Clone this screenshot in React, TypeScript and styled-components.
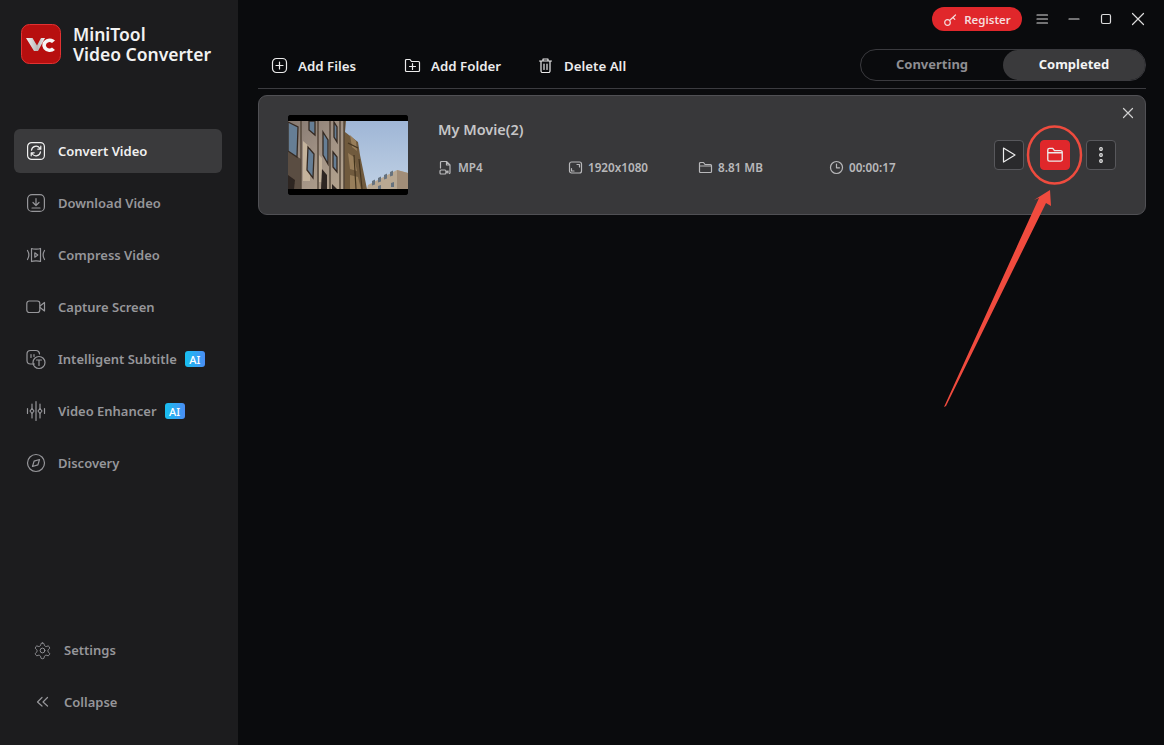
import React from 'react';
import styled, { createGlobalStyle } from 'styled-components';

const GlobalStyle = createGlobalStyle`
  html, body {
    margin: 0;
    height: 100%;
    background: #0a0b0d;
    overflow: hidden;
  }
  #root { height: 100%; }
  * { box-sizing: border-box; }
`;

const Shell = styled.div`
  position: relative;
  display: flex;
  width: 1164px;
  height: 745px;
  font-family: 'Noto Sans', 'Open Sans', sans-serif;
  font-size: 13px;
  font-weight: 600;
`;

const Sidebar = styled.aside`
  width: 238px;
  flex-shrink: 0;
  display: flex;
  flex-direction: column;
  background: #1c1c1e;
  padding: 23px 16px 21px 14px;
`;

const Brand = styled.div`
  display: flex;
  align-items: center;
  gap: 12px;
  padding-left: 7px;
  height: 42px;
  margin-bottom: 64px;
`;

const BrandName = styled.div`
  display: flex;
  flex-direction: column;
  gap: 3px;
  color: #f2f2f2;
  font-size: 17.5px;
  font-weight: 600;
  padding-top: 1px;
  white-space: nowrap;
`;

const BrandLine = styled.div`
  height: 17px;
  line-height: 17px;
`;

const Nav = styled.nav`
  display: flex;
  flex-direction: column;
  gap: 8px;
`;

const NavItem = styled.div<{ $active?: boolean }>`
  display: flex;
  align-items: center;
  height: 44px;
  padding-left: 11px;
  gap: 11px;
  border-radius: 6px;
  background: ${({ $active }) => ($active ? '#3a3a3c' : 'transparent')};
  color: ${({ $active }) => ($active ? '#f0f0f0' : '#96969a')};
  white-space: nowrap;
`;

const AiBadge = styled.span`
  display: flex;
  align-items: center;
  justify-content: center;
  width: 20px;
  height: 16px;
  margin-left: -3px;
  border-radius: 3px;
  background: linear-gradient(90deg, #16c0f0, #4a8df5);
  color: #fff;
  font-size: 11px;
  font-weight: 500;
`;

const BottomNav = styled.div`
  margin-top: auto;
  display: flex;
  flex-direction: column;
  gap: 8px;
`;

const BottomItem = styled.div`
  display: flex;
  align-items: center;
  height: 44px;
  padding-left: 19px;
  gap: 12px;
  color: #96969a;
`;

const Main = styled.main`
  flex: 1;
  display: flex;
  flex-direction: column;
  padding: 0 18px 0 20px;
  min-width: 0;
`;

const TitleBar = styled.div`
  height: 38px;
  padding-top: 7px;
  display: flex;
  justify-content: flex-end;
  align-items: flex-start;
  margin-right: -8px;
`;

const RegisterButton = styled.div`
  display: flex;
  align-items: center;
  justify-content: center;
  gap: 6px;
  width: 90px;
  height: 24px;
  border-radius: 12px;
  background: #e0272b;
  color: #f6dcdc;
  font-size: 11.5px;
  font-weight: 600;
  margin-right: 4px;
`;

const WindowButton = styled.div`
  display: flex;
  align-items: center;
  justify-content: center;
  width: 32px;
  height: 24px;
  color: #dcdcdc;
`;

const Toolbar = styled.div`
  display: flex;
  align-items: center;
  height: 51px;
  padding: 8px 0 0 13px;
  border-bottom: 1px solid #3c3c40;
  font-size: 13.3px;
`;

const ToolButton = styled.div<{ $width: number }>`
  display: flex;
  align-items: center;
  gap: 10px;
  width: ${({ $width }) => $width}px;
  color: #ececec;
  white-space: nowrap;
  padding-bottom: 3px;
`;

const Tabs = styled.div`
  margin-left: auto;
  display: flex;
  width: 286px;
  height: 32px;
  margin-bottom: 5px;
  border: 1px solid #3a3a3e;
  border-radius: 16px;
  font-size: 13px;
`;

const Tab = styled.div<{ $active?: boolean }>`
  flex: 1;
  display: flex;
  align-items: center;
  justify-content: center;
  border-radius: 16px;
  background: ${({ $active }) => ($active ? '#3a3a3c' : 'transparent')};
  color: ${({ $active }) => ($active ? '#f4f4f4' : '#8e8e92')};
  font-weight: 700;
  padding-bottom: 2px;
`;

const Card = styled.section`
  position: relative;
  margin-top: 6px;
  height: 120px;
  display: flex;
  align-items: center;
  padding: 0 29px;
  background: #38383a;
  border: 1px solid #505054;
  border-radius: 9px;
`;

const Thumb = styled.svg`
  width: 120px;
  height: 80px;
  flex-shrink: 0;
  border-radius: 3px;
`;

const Info = styled.div`
  margin-left: 30px;
  width: 520px;
  display: flex;
  flex-direction: column;
  gap: 20px;
  padding-bottom: 16px;
`;

const Title = styled.div`
  color: #c6c6c8;
  font-size: 14.5px;
  line-height: 20px;
`;

const Meta = styled.div`
  display: grid;
  grid-template-columns: 130px 130px 131px 1fr;
  color: #b8b8ba;
  font-size: 11.7px;
`;

const MetaItem = styled.div`
  display: flex;
  align-items: center;
  gap: 5px;
  white-space: nowrap;
`;

const Actions = styled.div`
  margin-left: auto;
  display: flex;
  gap: 16px;
`;

const ActionButton = styled.div<{ $primary?: boolean }>`
  display: flex;
  align-items: center;
  justify-content: center;
  width: 30px;
  height: 30px;
  border-radius: 4px;
  background: ${({ $primary }) => ($primary ? '#e0272b' : '#2a2a2c')};
  border: 1px solid ${({ $primary }) => ($primary ? '#e0272b' : '#58585c')};
  color: #ececec;
`;

const CloseCard = styled.div`
  position: absolute;
  top: 11px;
  right: 11px;
  display: flex;
  color: #d0d0d0;
`;

const Annotation = styled.svg`
  position: absolute;
  left: 0;
  top: 0;
  width: 1164px;
  height: 745px;
  pointer-events: none;
`;

const Icon = styled.svg.attrs({
  fill: 'none',
  stroke: 'currentColor',
  strokeWidth: 1.2,
  strokeLinecap: 'round',
  strokeLinejoin: 'round',
})`
  flex-shrink: 0;
  display: block;
`;

const navIcons: Record<string, React.ReactNode> = {
  convert: (
    <>
      <rect x="2.6" y="2.6" width="16.8" height="16.8" rx="4" />
      <path d="M6.5 10.2a4.6 4.6 0 0 1 8.2-2.2l1 1.2M15.8 6.2v3h-3M15.5 11.8a4.6 4.6 0 0 1-8.2 2.2l-1-1.2M6.2 15.8v-3h3" />
    </>
  ),
  download: (
    <>
      <rect x="2.6" y="2.6" width="16.8" height="16.8" rx="4.5" />
      <path d="M11 6.5v6.5M8 10.5l3 3 3-3M7 16h8" />
    </>
  ),
  compress: (
    <>
      <path d="M6.5 4.5c1.5.9 7.5.9 9 0v13c-1.5-.9-7.5-.9-9 0z" />
      <path d="M9.8 8.8l3 2.2-3 2.2zM2.5 6.5c1.6 2.6 1.6 6.4 0 9M19.5 6.5c-1.6 2.6-1.6 6.4 0 9" />
    </>
  ),
  capture: (
    <>
      <rect x="1.8" y="5" width="13" height="11.5" rx="2.5" />
      <path d="M15 10l4.5-3.5v8.500L15 11.5" />
    </>
  ),
  subtitle: (
    <>
      <path d="M9.5 16H5.5A3.5 3.5 0 0 1 2 12.5V6a3.5 3.5 0 0 1 3.5-3.5H11A3.5 3.5 0 0 1 14.5 6" />
      <path d="M6 6.5v3M9 6.5v2" />
      <circle cx="14" cy="14.5" r="6" />
      <path d="M11.5 12h5M14 12v5.5" />
    </>
  ),
  enhancer: (
    <>
      <path d="M11 1.5v19M7 4v4.5M7 13.5V18M15 4v4.5M15 13.5V18M2.5 8.5v5M19.5 8.5v5" />
      <path d="M7 8.5l2 2.5-2 2.5-2-2.5zM15 8.5l2 2.5-2 2.5-2-2.5z" />
    </>
  ),
  discovery: (
    <>
      <circle cx="11" cy="11" r="8.5" />
      <path d="M14.5 7.5l-1.6 5.4-5.4 1.6 1.6-5.4z" />
    </>
  ),
};

const NavIcon = ({ name }: { name: string }) => (
  <Icon width="22" height="22" viewBox="0 0 22 22">
    {navIcons[name]}
  </Icon>
);

const navItems = [
  { icon: 'convert', label: 'Convert Video', active: true },
  { icon: 'download', label: 'Download Video' },
  { icon: 'compress', label: 'Compress Video' },
  { icon: 'capture', label: 'Capture Screen' },
  { icon: 'subtitle', label: 'Intelligent Subtitle', ai: true },
  { icon: 'enhancer', label: 'Video Enhancer', ai: true },
  { icon: 'discovery', label: 'Discovery' },
];

const Logo = () => (
  <svg width="40" height="40" viewBox="0 0 40 40">
    <defs>
      <linearGradient id="vcGrad" x1="0" y1="0" x2="1" y2="0">
        <stop offset="0" stopColor="#f4f4f4" />
        <stop offset="0.6" stopColor="#b9b9b9" />
        <stop offset="1" stopColor="#f0f0f0" />
      </linearGradient>
    </defs>
    <rect x="0.5" y="0.5" width="39" height="39" rx="8" fill="#b70f0f" stroke="#e23232" />
    <path d="M5 14h6.5l4.5 7.5 4-7.5h4l-7 13h-4z" fill="url(#vcGrad)" />
    <path d="M34 16.5a8 8 0 0 0-12.5 2.5 7 7 0 0 0 1 6 8 8 0 0 0 11.5 1l-3-2.5a3.8 3.8 0 0 1-5.5-.5 3 3 0 0 1 0-3.5 4 4 0 0 1 5.500-.5z" fill="#f6f6f6" />
  </svg>
);

const windows = [
  '0,7 10,12 9,42 0,36',
  '21,6 27,6 27,20 21,15',
  '20,32 26,39 25,63 19,55',
  '35,17 40,25 40,49 35,40',
  '46,7 49,12 49,27 46,22',
  '45,37 49,42 49,57 45,52',
];

const darkWindows = ['0,60 7,65 6,74 0,74', '34,54 39,60 39,74 33,74', '44,69 49,74 44,74'];

const Thumbnail = () => (
  <Thumb viewBox="0 0 120 80">
    <defs>
      <linearGradient id="sky" x1="0" y1="0" x2="0" y2="1">
        <stop offset="0" stopColor="#9fb6d6" />
        <stop offset="1" stopColor="#bfd0e4" />
      </linearGradient>
      <linearGradient id="stone" x1="0" y1="0" x2="1" y2="1">
        <stop offset="0" stopColor="#857870" />
        <stop offset="0.5" stopColor="#a09184" />
        <stop offset="1" stopColor="#b5a48e" />
      </linearGradient>
      <filter id="soft">
        <feGaussianBlur stdDeviation="0.45" />
      </filter>
    </defs>
    <rect width="120" height="80" fill="#000" />
    <g filter="url(#soft)">
      <rect y="6" width="120" height="68" fill="url(#sky)" />
      <path d="M80 70l29-15 11 3v16H79z" fill="#b9a892" />
      <path d="M109 55l11 3v16h-11z" fill="#a18d78" />
      <path d="M84 66l3-1.5v5l-3 1zM90 63l3-1.5v5l-3 1zM96 60l3-1.5v5l-3 1zM102 57l3-1.5v5l-3 1zM103 68l3-1v5h-3zM90 71l3-1v4h-3z" fill="#66727e" />
      <path d="M58 6l-1 11 13 10 2 13 7 34H52V6z" fill="#6f5a3e" />
      <path d="M62 20l6 6 1 10-5-4zM60 38l6 4 3 14-7-2zM62 60l8 2 3 12H62z" fill="#987e5a" />
      <path d="M66 40l2 34M71 44l3 30M60 28l10 5" stroke="#43341f" strokeWidth="1.2" fill="none" />
      <path d="M0 6h56v68H0z" fill="url(#stone)" />
      <path d="M0 36l13 8v30H0z" fill="#5a4d42" />
      <path d="M13 6v68M30 6v68M42 6v68M52 6v68M56 6v68" stroke="#524438" strokeWidth="1.4" fill="none" />
      <path d="M15 26l7 6v34h-7zM31 40l3 3v24h-3z" fill="#c4b39c" />
      {windows.map((points) => (
        <polygon key={points} points={points} fill="#667e95" stroke="#352a23" strokeWidth="1.3" />
      ))}
      {darkWindows.map((points) => (
        <polygon key={points} points={points} fill="#2f2620" />
      ))}
    </g>
    <rect y="0" width="120" height="6" fill="#000" />
    <rect y="74" width="120" height="6" fill="#000" />
  </Thumb>
);

export default function App() {
  return (
    <Shell>
      <GlobalStyle />
      <Sidebar>
        <Brand>
          <Logo />
          <BrandName>
            <BrandLine>MiniTool</BrandLine>
            <BrandLine>Video Converter</BrandLine>
          </BrandName>
        </Brand>
        <Nav>
          {navItems.map((item) => (
            <NavItem key={item.label} $active={item.active}>
              <NavIcon name={item.icon} />
              <span>{item.label}</span>
              {item.ai && <AiBadge>AI</AiBadge>}
            </NavItem>
          ))}
        </Nav>
        <BottomNav>
          <BottomItem>
            <Icon width="19" height="19" viewBox="0 0 24 24" strokeWidth="1.5">
              <path d="M12.2 2.5h-.4a2 2 0 0 0-2 2v.2a2 2 0 0 1-1 1.7l-.4.3a2 2 0 0 1-2 0l-.2-.1a2 2 0 0 0-2.7.7l-.2.4a2 2 0 0 0 .7 2.7l.2.1a2 2 0 0 1 1 1.7v.5a2 2 0 0 1-1 1.7l-.2.1a2 2 0 0 0-.7 2.7l.2.4a2 2 0 0 0 2.7.7l.2-.1a2 2 0 0 1 2 0l.4.3a2 2 0 0 1 1 1.7v.2a2 2 0 0 0 2 2h.4a2 2 0 0 0 2-2v-.2a2 2 0 0 1 1-1.7l.4-.3a2 2 0 0 1 2 0l.2.1a2 2 0 0 0 2.7-.7l.2-.4a2 2 0 0 0-.7-2.700l-.2-.1a2 2 0 0 1-1-1.7v-.5a2 2 0 0 1 1-1.7l.2-.1a2 2 0 0 0 .7-2.7l-.2-.4a2 2 0 0 0-2.7-.7l-.2.1a2 2 0 0 1-2 0l-.4-.3a2 2 0 0 1-1-1.7v-.2a2 2 0 0 0-2-2z" />
              <circle cx="12" cy="12" r="3" />
            </Icon>
            <span>Settings</span>
          </BottomItem>
          <BottomItem>
            <Icon width="19" height="19" viewBox="0 0 19 19" strokeWidth="1.3">
              <path d="M9 4.5L4.5 9 9 13M14.5 4.5L10 9l4.5 4" />
            </Icon>
            <span>Collapse</span>
          </BottomItem>
        </BottomNav>
      </Sidebar>

      <Main>
        <TitleBar>
          <RegisterButton>
            <Icon width="15" height="15" viewBox="0 0 15 15" strokeWidth="2" stroke="#f6dcdc">
              <circle cx="4.5" cy="10.5" r="2.8" />
              <path d="M6.8 8.2L12.5 3M10 5.5l1.8 1.8" />
            </Icon>
            <span>Register</span>
          </RegisterButton>
          <WindowButton>
            <Icon width="14" height="14" viewBox="0 0 14 14" strokeWidth="1.5" strokeLinecap="butt">
              <path d="M2 3h10.5M2 7h10.5M2 11h10.5" />
            </Icon>
          </WindowButton>
          <WindowButton>
            <Icon width="14" height="14" viewBox="0 0 14 14" strokeWidth="1.5" strokeLinecap="butt">
              <path d="M2 7h10" />
            </Icon>
          </WindowButton>
          <WindowButton>
            <Icon width="14" height="14" viewBox="0 0 14 14" strokeWidth="1.5">
              <rect x="2.5" y="2.5" width="9" height="9" rx="1.5" />
            </Icon>
          </WindowButton>
          <WindowButton>
            <Icon width="14" height="14" viewBox="0 0 14 14" strokeWidth="1.5">
              <path d="M1.5 1.5l11 11M12.5 1.5l-11 11" />
            </Icon>
          </WindowButton>
        </TitleBar>

        <Toolbar>
          <ToolButton $width={133}>
            <Icon width="17" height="17" viewBox="0 0 17 17">
              <rect x="1.5" y="1.5" width="14" height="14" rx="4" />
              <path d="M8.5 5v7M5 8.5h7" />
            </Icon>
            <span>Add Files</span>
          </ToolButton>
          <ToolButton $width={133}>
            <Icon width="17" height="17" viewBox="0 0 17 17">
              <path d="M1.5 3.5a1 1 0 0 1 1-1h3.5l1.5 2h7a1 1 0 0 1 1 1v8a1 1 0 0 1-1 1h-12a1 1 0 0 1-1-1z" />
              <path d="M8.5 6.5v6M5.5 9.5h6" />
            </Icon>
            <span>Add Folder</span>
          </ToolButton>
          <ToolButton $width={100}>
            <Icon width="17" height="17" viewBox="0 0 17 17">
              <path d="M2.5 4h12M6 4V2h5v2M4 4v10a1.5 1.5 0 0 0 1.5 1.5h6A1.5 1.5 0 0 0 13 14V4M7 7v5.5M10 7v5.5" />
            </Icon>
            <span>Delete All</span>
          </ToolButton>
          <Tabs>
            <Tab>Converting</Tab>
            <Tab $active>Completed</Tab>
          </Tabs>
        </Toolbar>

        <Card>
          <CloseCard>
            <Icon width="12" height="12" viewBox="0 0 12 12" strokeWidth="1.3">
              <path d="M1.5 1.5l9 9M10.5 1.5l-9 9" />
            </Icon>
          </CloseCard>
          <Thumbnail />
          <Info>
            <Title>My Movie(2)</Title>
            <Meta>
              <MetaItem>
                <Icon width="15" height="15" viewBox="0 0 15 15" strokeWidth="1">
                  <path d="M2.5 8V2.5a1 1 0 0 1 1-1h5l3.5 3.5v7.5a1 1 0 0 1-.5 1M8.5 1.5V5H12" />
                  <rect x="2" y="10" width="6" height="4" rx="1" />
                  <path d="M8 12l2-1v2z" />
                </Icon>
                <span>MP4</span>
              </MetaItem>
              <MetaItem>
                <Icon width="15" height="15" viewBox="0 0 15 15" strokeWidth="1">
                  <rect x="1.5" y="2" width="12" height="11" rx="2" />
                  <path d="M9 4.5h2.5V7M3.5 8.5V11H6" />
                </Icon>
                <span>1920x1080</span>
              </MetaItem>
              <MetaItem>
                <Icon width="15" height="15" viewBox="0 0 15 15" strokeWidth="1">
                  <path d="M1.5 3.5a1 1 0 0 1 1-1h3l1.5 2h5.5a1 1 0 0 1 1 1v6a1 1 0 0 1-1 1h-10a1 1 0 0 1-1-1zM1.5 6h12" />
                </Icon>
                <span>8.81 MB</span>
              </MetaItem>
              <MetaItem>
                <Icon width="15" height="15" viewBox="0 0 15 15" strokeWidth="1">
                  <circle cx="7.5" cy="7.5" r="6" />
                  <path d="M7.5 4v3.8h3" />
                </Icon>
                <span>00:00:17</span>
              </MetaItem>
            </Meta>
          </Info>
          <Actions>
            <ActionButton>
              <Icon width="18" height="18" viewBox="0 0 18 18" strokeWidth="1.3">
                <path d="M3.5 2l11.5 7-11.5 7z" />
              </Icon>
            </ActionButton>
            <ActionButton $primary>
              <Icon width="20" height="20" viewBox="0 0 18 18" strokeWidth="1.1">
                <path d="M2.5 4.5a1.5 1.5 0 0 1 1.500-1.500h3l1.500 2H14a1.5 1.5 0 0 1 1.5 1.5v6.500A1.5 1.5 0 0 1 14 14.5H4A1.5 1.5 0 0 1 2.5 13zM2.5 7h13" />
              </Icon>
            </ActionButton>
            <ActionButton>
              <Icon width="18" height="18" viewBox="0 0 18 18" stroke="none" fill="currentColor">
                <circle cx="9" cy="3" r="1.3" />
                <circle cx="9" cy="9" r="1.3" />
                <circle cx="9" cy="15" r="1.3" />
              </Icon>
            </ActionButton>
          </Actions>
        </Card>
      </Main>

      <Annotation viewBox="0 0 1164 745">
        <ellipse cx="1054.5" cy="155" rx="26.5" ry="28.5" fill="none" stroke="#ee4b3e" strokeWidth="2.5" />
        <path d="M1050 190l1 16-5-3-100 203-2 1 95-209-5 2z" fill="#f04b3e" />
      </Annotation>
    </Shell>
  );
}
